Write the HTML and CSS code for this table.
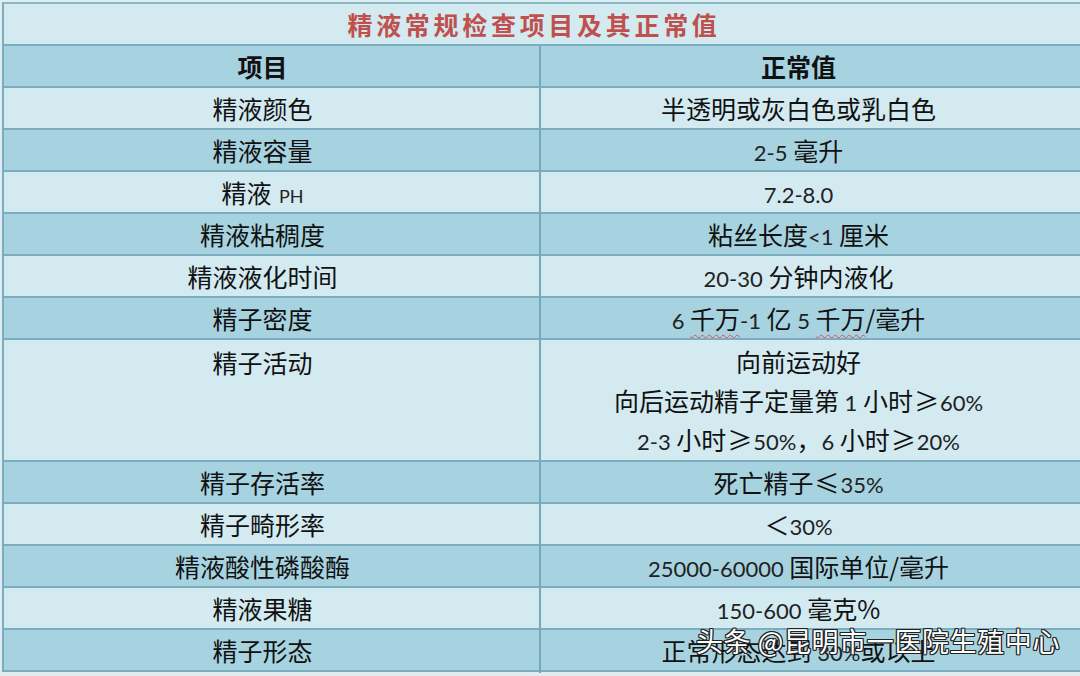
FILE: index.html
```
<!DOCTYPE html>
<html lang="zh-CN">
<head>
<meta charset="utf-8">
<title>精液常规检查项目及其正常值</title>
<link rel="stylesheet" href="styles.css">
</head>
<body>
<div class="sheet">
  <div class="title">精液常规检查项目及其正常值</div>
  <div class="row dark head"><div class="c1">项目</div><div class="c2">正常值</div></div>
  <div class="row light"><div class="c1">精液颜色</div><div class="c2">半透明或灰白色或乳白色</div></div>
  <div class="row dark"><div class="c1">精液容量</div><div class="c2"><span class="n">2-5</span> 毫升</div></div>
  <div class="row light"><div class="c1">精液 <span class="n ph">PH</span></div><div class="c2"><span class="n">7.2-8.0</span></div></div>
  <div class="row dark"><div class="c1">精液粘稠度</div><div class="c2">粘丝长度<span class="n">&lt;1</span> 厘米</div></div>
  <div class="row light"><div class="c1">精液液化时间</div><div class="c2"><span class="n">20-30</span> 分钟内液化</div></div>
  <div class="row dark"><div class="c1">精子密度</div><div class="c2"><span class="n">6</span> <span class="sq">千万</span><span class="n">-1</span> 亿 <span class="n">5</span> <span class="sq">千万</span>/毫升</div></div>
  <div class="row light tall">
    <div class="c1">精子活动</div>
    <div class="c2 lines">
      <div>向前运动好</div>
      <div>向后运动精子定量第 <span class="n">1</span> 小时<span class="ge">≥</span><span class="n">60%</span></div>
      <div><span class="n">2-3</span> 小时<span class="ge">≥</span><span class="n">50%</span>，<span class="n">6</span> 小时<span class="ge">≥</span><span class="n">20%</span></div>
    </div>
  </div>
  <div class="row dark"><div class="c1">精子存活率</div><div class="c2">死亡精子<span class="ge">≤</span><span class="n">35%</span></div></div>
  <div class="row light"><div class="c1">精子畸形率</div><div class="c2">＜<span class="n">30%</span></div></div>
  <div class="row dark"><div class="c1">精液酸性磷酸酶</div><div class="c2"><span class="n">25000-60000</span> 国际单位/毫升</div></div>
  <div class="row light"><div class="c1">精液果糖</div><div class="c2"><span class="n">150-600</span> 毫克%</div></div>
  <div class="row dark"><div class="c1">精子形态</div><div class="c2">正常形态达到 <span class="n">30%</span>或以上</div></div>
</div>
<div class="watermark">头条 @昆明市一医院生殖中心</div>
</body>
</html>
```

FILE: styles.css
```
html, body {
  margin: 0;
  padding: 0;
}
body {
  width: 1080px;
  height: 676px;
  overflow: hidden;
  background: #dfedf1;
  font-family: "Noto Sans CJK SC", "Noto Sans", sans-serif;
  color: #111;
  position: relative;
}
.sheet {
  margin-top: 2px;
  margin-left: 2px;
  width: 1090px;
  border-top: 2px solid #86b8c8;
  border-left: 2px solid #7aadbf;
}
.title {
  height: 40px;
  line-height: 40px;
  background: #d3eaf1;
  border-bottom: 2px solid #7aadbf;
  text-align: center;
  padding-right: 30px;
  color: #c0504d;
  font-weight: 700;
  font-size: 25px;
  letter-spacing: 3.7px;
}
.row {
  display: grid;
  grid-template-columns: 537px 1fr;
  height: 40px;
  border-bottom: 2px solid #7aadbf;
  font-size: 25px;
}
.row.light { background: #d3eaf1; }
.row.dark { background: #a7d3e1; }
.c1, .c2 {
  text-align: center;
  line-height: 40px;
  white-space: nowrap;
}
.c1 {
  border-right: 2px solid #74a8ba;
  padding-right: 18px;
}
.c2 {
  padding-right: 38px;
}
.head {
  font-weight: 700;
}
.tall {
  height: 120px;
}
.tall .c1 {
  padding-top: 2px;
}
.lines {
  padding-top: 2px;
}
.lines div {
  height: 39px;
  line-height: 39px;
}
.n {
  font-family: "Lato", "Noto Sans", sans-serif;
  font-size: 22px;
  color: #222;
}
.ge {
  display: inline-block;
  width: 27px;
  text-align: center;
}
.ph {
  font-size: 18px;
  margin-left: 2px;
}
.sq {
  text-decoration: underline wavy #e05050;
  text-decoration-thickness: 1px;
  text-underline-offset: 5px;
}
.watermark {
  position: absolute;
  left: 696px;
  top: 623px;
  font-size: 27px;
  letter-spacing: 0.6px;
  line-height: 36px;
  color: #ffffff;
  font-family: "Noto Sans CJK SC", sans-serif;
  text-shadow: 1px 0 0 #222, -1px 0 0 #222, 0 1px 0 #222, 0 -1px 0 #222,
    1px 1px 0 #222, -1px -1px 0 #222, 1px -1px 0 #222, -1px 1px 0 #222;
  white-space: nowrap;
}
```
